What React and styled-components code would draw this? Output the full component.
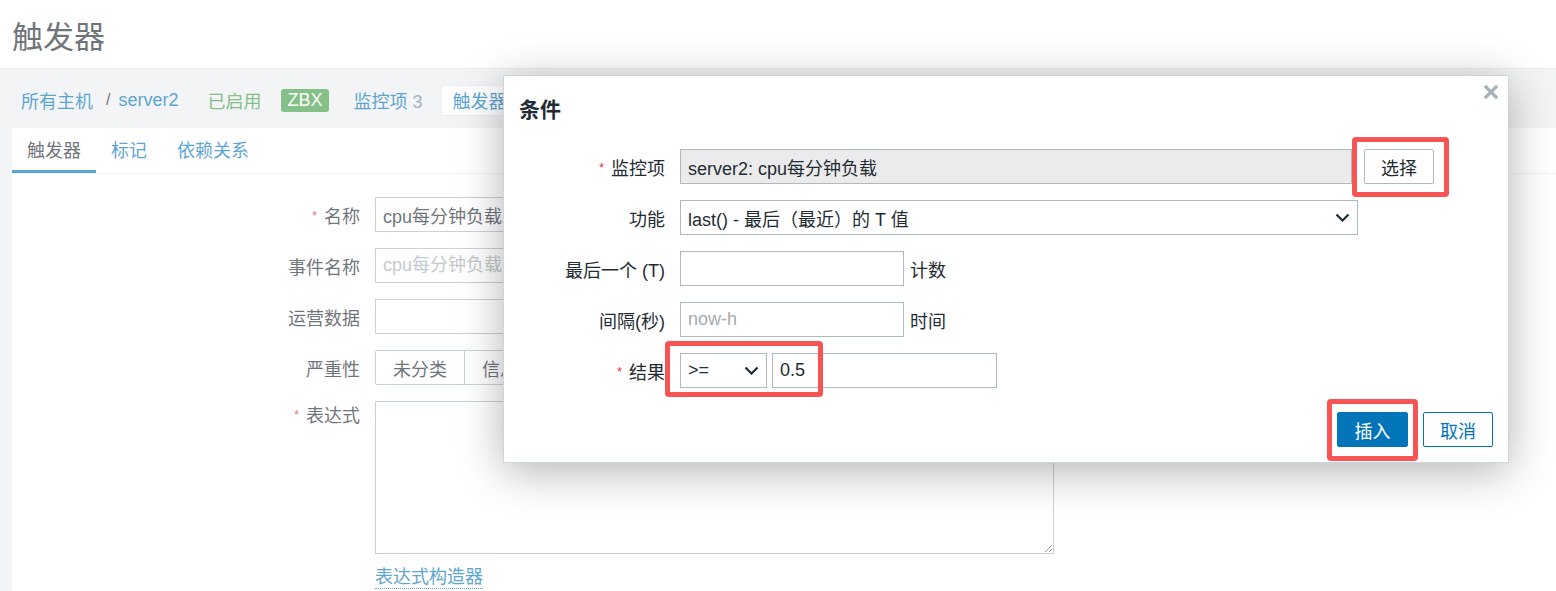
import React from 'react';
import styled, { createGlobalStyle } from 'styled-components';

const GlobalStyle = createGlobalStyle`
  html, body {
    margin: 0;
    padding: 0;
  }
  body {
    font-family: "Liberation Sans", "Noto Sans CJK SC", Arial, sans-serif;
    font-size: 18px;
    color: #1f2c33;
    background: #ebeef0;
  }
  * {
    box-sizing: border-box;
  }
`;

const Page = styled.div`
  position: relative;
  min-height: 100vh;
  background: #ebeef0;
  overflow: hidden;
`;

const Header = styled.header`
  height: 69px;
  background: #fff;
  border-bottom: 1px solid #dfe4e7;
  display: flex;
  align-items: center;
  padding-left: 12px;
`;

const Title = styled.h1`
  margin: 0;
  font-size: 31px;
  font-weight: normal;
  color: #1f2c33;
`;

const Nav = styled.nav`
  height: 59px;
  display: flex;
  align-items: center;
  padding: 3px 0 0 21px;
  white-space: nowrap;
`;

const NavLink = styled.a`
  color: ${(p) => (p.$green ? '#429e47' : '#0275b8')};
  text-decoration: none;
  margin-left: ${(p) => p.$ml || 0}px;
`;

const Slash = styled.span`
  color: #1f2c33;
  margin: 0 8px 0 13px;
  font-size: 16px;
`;

const Badge = styled.span`
  margin-left: 20px;
  background: #429e47;
  color: #fff;
  font-size: 18px;
  line-height: 23px;
  padding: 0 6px;
  border-radius: 3px;
`;

const Count = styled.span`
  color: #768d99;
  margin-left: 5px;
`;

const NavBox = styled.span`
  margin-left: 18px;
  height: 31px;
  display: flex;
  align-items: center;
  padding: 0 11px;
  background: #fff;
  border: 1px solid #dfe4e7;
  border-radius: 2px;
  color: #0275b8;
`;

const Panel = styled.main`
  margin-left: 12px;
  background: #fff;
  min-height: 480px;
`;

const TabBar = styled.div`
  height: 46px;
  display: flex;
  border-bottom: 1px solid #ebeef0;
`;

const Tab = styled.span`
  display: flex;
  align-items: center;
  padding: 0 15px;
  border-bottom: 3px solid ${(p) => (p.$active ? '#0275b8' : 'transparent')};
  color: ${(p) => (p.$active ? '#1f2c33' : '#0275b8')};
`;

const FormGrid = styled.div`
  display: grid;
  grid-template-columns: 348px 1fr;
  column-gap: 15px;
  row-gap: 16px;
  padding-top: 23px;
  align-items: center;
`;

const Label = styled.label`
  text-align: right;
  align-self: ${(p) => (p.$top ? 'start' : 'center')};
  white-space: nowrap;
`;

const Required = styled.span`
  color: #e33734;
  font-size: 13px;
  margin-right: 7px;
  position: relative;
  top: -3px;
`;

const TextInput = styled.input`
  height: 35px;
  width: ${(p) => p.$w || 679}px;
  border: 1px solid #acbbc2;
  background: ${(p) => (p.$grey ? '#ebebeb' : '#fff')};
  font: inherit;
  color: #1f2c33;
  padding: 0 7px;
  outline: none;

  &::placeholder {
    color: #a3abaf;
  }
`;

const Segments = styled.div`
  display: flex;
`;

const Segment = styled.span`
  height: 35px;
  display: flex;
  align-items: center;
  padding: 0 17px;
  border: 1px solid #acbbc2;
  margin-left: -1px;
  white-space: nowrap;

  &:first-child {
    margin-left: 0;
    border-radius: 2px 0 0 2px;
  }
`;

const Area = styled.textarea`
  width: 679px;
  height: 153px;
  border: 1px solid #acbbc2;
  font: inherit;
  resize: both;
`;

const BuilderLink = styled.a`
  justify-self: start;
  color: #0275b8;
  text-decoration: none;
  border-bottom: 1px dotted #0275b8;
  margin-top: -4px;
  line-height: 22px;
`;

const Dimmer = styled.div`
  position: absolute;
  inset: 0;
  background: rgba(255, 255, 255, 0.35);
`;

const Dialog = styled.div`
  position: absolute;
  left: 503px;
  top: 75px;
  width: 1006px;
  height: 388px;
  background: #fff;
  border: 1px solid #ccd5d9;
  box-shadow: 0 8px 42px rgba(0, 0, 0, 0.3);
  display: flex;
  flex-direction: column;
`;

const DialogHead = styled.div`
  height: 64px;
  display: flex;
  align-items: center;
  padding-left: 15px;
`;

const DialogTitle = styled.h2`
  margin: 0;
  font-size: 21px;
  font-weight: bold;
  color: #1f2c33;
`;

const Close = styled.button`
  position: absolute;
  top: 9px;
  right: 10px;
  width: 14px;
  height: 14px;
  padding: 0;
  border: 0;
  background: none;
  display: flex;
`;

const DialogGrid = styled.div`
  display: grid;
  grid-template-columns: 146px 1fr;
  column-gap: 15px;
  row-gap: 16px;
  padding: 9px 15px 0;
  align-items: center;
`;

const Controls = styled.div`
  position: relative;
  display: flex;
  align-items: center;
  gap: ${(p) => p.$gap || 6}px;
`;

const Unit = styled.span`
  white-space: nowrap;
`;

const SelectBox = styled.div`
  height: 35px;
  width: ${(p) => p.$w}px;
  border: 1px solid #acbbc2;
  display: flex;
  align-items: center;
  justify-content: space-between;
  padding: 0 7px;
  white-space: nowrap;
`;

const Button = styled.button`
  position: relative;
  height: 35px;
  width: ${(p) => p.$w || 70}px;
  font: inherit;
  border-radius: 2px;
  border: 1px solid ${(p) => (p.$variant === 'grey' ? '#acbbc2' : '#0275b8')};
  background: ${(p) => (p.$variant === 'main' ? '#0275b8' : '#fff')};
  color: ${(p) => (p.$variant === 'main' ? '#fff' : p.$variant === 'grey' ? '#1f2c33' : '#0275b8')};
  padding: 0;
`;

const Footer = styled.div`
  margin-top: auto;
  display: flex;
  justify-content: flex-end;
  gap: 15px;
  padding: 0 15px 15px 0;
`;

const Mark = styled.span`
  position: absolute;
  top: ${(p) => p.$t}px;
  left: ${(p) => p.$l}px;
  width: ${(p) => p.$w}px;
  height: ${(p) => p.$h}px;
  border: 5px solid #f95454;
  border-radius: 4px;
  pointer-events: none;
`;

const Chevron = () => (
  <svg width="15" height="9" viewBox="0 0 15 9">
    <polyline points="1.5,1.5 7.5,7.5 13.5,1.5" fill="none" stroke="#1f2c33" strokeWidth="2.2" />
  </svg>
);

const CloseIcon = () => (
  <svg width="14" height="14" viewBox="0 0 14 14">
    <path d="M2 2 L12 12 M12 2 L2 12" stroke="#a5b2b8" strokeWidth="3.2" strokeLinecap="square" />
  </svg>
);

const severities = ['未分类', '信息', '警告', '一般严重', '严重', '灾难'];

export default function App() {
  return (
    <Page>
      <GlobalStyle />
      <Header>
        <Title>触发器</Title>
      </Header>
      <Nav>
        <NavLink>所有主机</NavLink>
        <Slash>/</Slash>
        <NavLink>server2</NavLink>
        <NavLink $green $ml={29}>已启用</NavLink>
        <Badge>ZBX</Badge>
        <NavLink $ml={25}>
          监控项<Count>3</Count>
        </NavLink>
        <NavBox>触发器 1</NavBox>
      </Nav>
      <Panel>
        <TabBar>
          <Tab $active>触发器</Tab>
          <Tab>标记</Tab>
          <Tab>依赖关系</Tab>
        </TabBar>
        <FormGrid>
          <Label>
            <Required>*</Required>名称
          </Label>
          <TextInput readOnly value="cpu每分钟负载" />
          <Label>事件名称</Label>
          <TextInput readOnly placeholder="cpu每分钟负载" />
          <Label>运营数据</Label>
          <TextInput readOnly />
          <Label>严重性</Label>
          <Segments>
            {severities.map((s) => (
              <Segment key={s}>{s}</Segment>
            ))}
          </Segments>
          <Label $top>
            <Required>*</Required>表达式
          </Label>
          <Area readOnly />
          <span />
          <BuilderLink>表达式构造器</BuilderLink>
        </FormGrid>
      </Panel>

      <Dimmer />

      <Dialog>
        <DialogHead>
          <DialogTitle>条件</DialogTitle>
        </DialogHead>
        <Close aria-label="关闭">
          <CloseIcon />
        </Close>
        <DialogGrid>
          <Label>
            <Required>*</Required>监控项
          </Label>
          <Controls $gap={12}>
            <TextInput $grey $w={672} readOnly value="server2: cpu每分钟负载" />
            <Button $variant="grey">
              选择
              <Mark $t={-13} $l={-13} $w={97} $h={60} />
            </Button>
          </Controls>
          <Label>功能</Label>
          <SelectBox $w={678}>
            <span>last() - 最后（最近）的 T 值</span>
            <Chevron />
          </SelectBox>
          <Label>最后一个 (T)</Label>
          <Controls>
            <TextInput $w={224} readOnly />
            <Unit>计数</Unit>
          </Controls>
          <Label>间隔(秒)</Label>
          <Controls>
            <TextInput $w={224} readOnly placeholder="now-h" />
            <Unit>时间</Unit>
          </Controls>
          <Label>
            <Required>*</Required>结果
          </Label>
          <Controls $gap={5}>
            <SelectBox $w={87}>
              <span>&gt;=</span>
              <Chevron />
            </SelectBox>
            <TextInput $w={225} readOnly value="0.5" />
            <Mark $t={-12} $l={-15} $w={158} $h={56} />
          </Controls>
        </DialogGrid>
        <Footer>
          <Button $variant="main" $w={71}>
            插入
            <Mark $t={-14} $l={-11} $w={91} $h={62} />
          </Button>
          <Button $w={70}>取消</Button>
        </Footer>
      </Dialog>
    </Page>
  );
}
